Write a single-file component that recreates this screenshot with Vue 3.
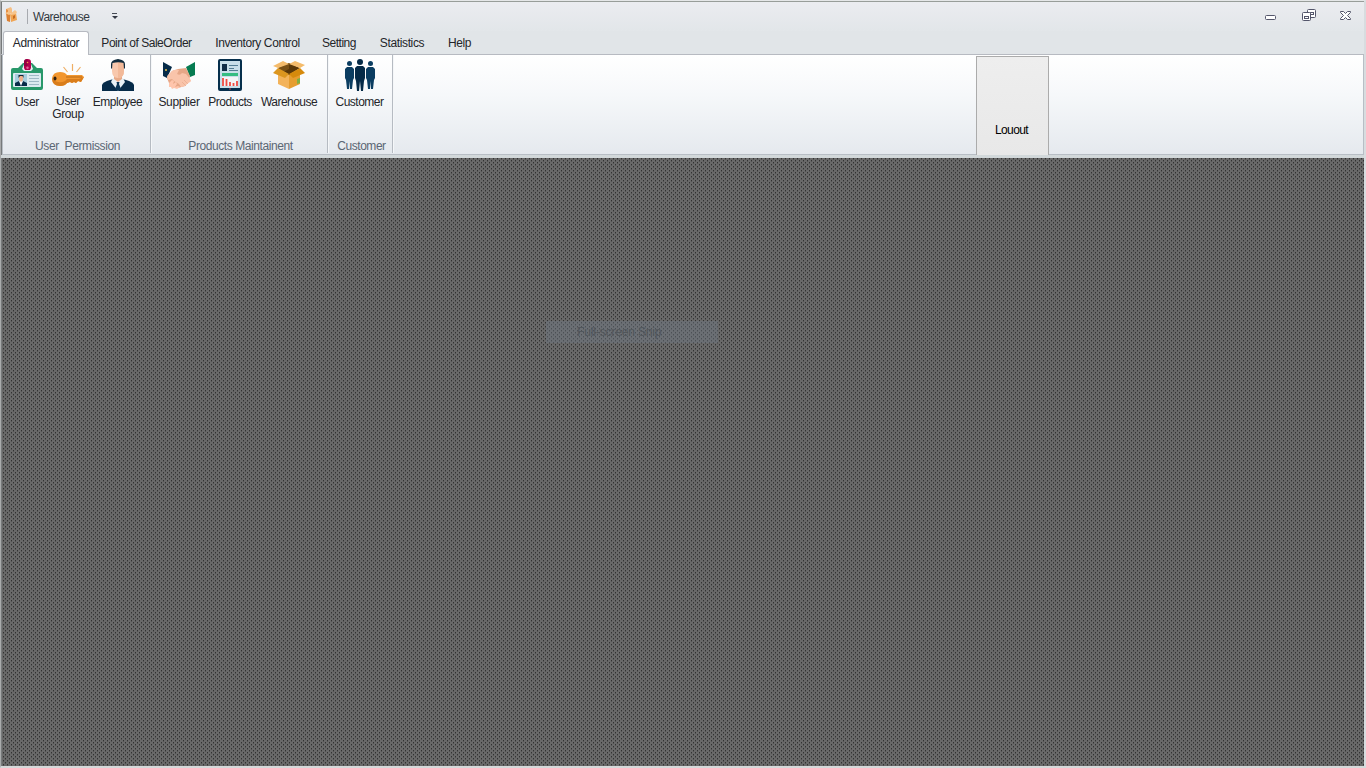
<script setup>
const tabs = [
  { t: 'Administrator', w: 86, s: -0.32, on: true },
  { t: 'Point of SaleOrder', w: 115, s: -0.47 },
  { t: 'Inventory Control', w: 107, s: -0.41 },
  { t: 'Setting', w: 56, s: -0.5 },
  { t: 'Statistics', w: 70, s: -0.37 },
  { t: 'Help', w: 45, s: -0.4 },
]
const groups = [
  { name: 'User  Permission', w: 147, s: -0.4, items: [
    { t: 'User', w: 42, s: -0.3, icon: 'user' },
    { t: 'User\nGroup', w: 40, s: -0.4, icon: 'key' },
    { t: 'Employee', w: 59, s: -0.5, icon: 'employee' },
  ] },
  { name: 'Products Maintainent', w: 175, s: -0.42, items: [
    { t: 'Supplier', w: 49, s: -0.37, icon: 'supplier' },
    { t: 'Products', w: 53, s: -0.46, icon: 'products' },
    { t: 'Warehouse', w: 65, s: -0.53, icon: 'warehouse' },
  ] },
  { name: 'Customer', w: 63, s: -0.47, items: [
    { t: 'Customer', w: 56, s: -0.5, icon: 'customer' },
  ] },
]
</script>

<template>
  <div class="window">
    <header class="titlebar">
      <svg class="app-icon" width="14" height="16" viewBox="0 0 14 16">
        <path d="M1 2l5-2 1 2v4l-5 1-1-2z" fill="#f5be83" /><path d="M1 2l2 1v4l-2-1z" fill="#e69043" />
        <path d="M1 6l4 1v8l-3-1z" fill="#dc8132" /><path d="M5 7l6-1 1 7-6 2z" fill="#f0a553" />
        <path d="M5 7l5-4 2 2-1 2-5 1zM0 6l3-1 3 2-2 1z" fill="#f7c58c" /><path d="M8 9l2-1v3l-2 1z" fill="#c66b21" />
      </svg>
      <span class="rule"></span>
      <span class="title">Warehouse</span>
      <svg class="more" width="7" height="6" viewBox="0 0 7 6"><path d="M0 0h5v1H0z" fill="#444953" /><path d="M0 3h6L3 6z" fill="#343944" /></svg>
      <span class="spacer"></span>
      <svg class="controls" width="88" height="16" viewBox="0 0 88 16" fill="none" stroke="#54566b">
        <rect x="1.500" y="7.500" width="10" height="4" rx="1" fill="#fff" />
        <rect x="43.500" y="1.500" width="8" height="8" rx="1" fill="#fff" /><rect x="46.500" y="4.500" width="3" height="2" />
        <rect x="38.500" y="4.500" width="8" height="8" rx="1" fill="#fff" /><rect x="40.500" y="8.500" width="4" height="2" />
        <path d="M76.500 3.500h3l2 2 2-2h3v1l-3 3 3 3v1h-3l-2-2-2 2h-3v-1l3-3-3-3z" fill="#fff" />
      </svg>
    </header>
    <nav class="tabs">
      <div v-for="tab in tabs" :key="tab.t" class="tab" :class="{ on: tab.on }" :style="{ width: tab.w + 'px', letterSpacing: tab.s + 'px' }">{{ tab.t }}</div>
    </nav>
    <section class="ribbon">
      <div v-for="g in groups" :key="g.name" class="group" :style="{ width: g.w + 'px' }">
        <div class="items">
          <div v-for="i in g.items" :key="i.t" class="item" :class="i.icon" :style="{ width: i.w + 'px' }">
            <svg width="32" height="32" viewBox="0 0 32 32">
              <g v-if="i.icon === 'user'">
                <path d="M2 9h5l5-5h9l5 5h4q2 0 2 2v18q0 2-2 2H2q-2 0-2-2V11q0-2 2-2z" fill="#28986a" />
                <path d="M13 5h7l2 5-2 2h-7l-2-2z" fill="#e5f0f3" />
                <rect x="2" y="14" width="28" height="14" rx="1" fill="#dceaf0" />
                <path d="M13 3q0-3 3.500-3t3.500 3v6l-1 2h-5l-1-2z" fill="#b4004e" /><path d="M13 3q0-3 3.500-3v7H13z" fill="#940042" /><circle cx="16.500" cy="8.700" r="1.200" fill="#dd6a96" /><circle cx="16.500" cy="3.500" r=".8" fill="#ef9d48" />
                <path d="M4 15h12v12H4z" fill="#a8cede" /><path d="M4 27v-3l4-2h4l4 2v3z" fill="#092c49" /><path d="M8 22h4l-2 5z" fill="#fff" /><path d="M8 17h4v4l-2 2-2-2z" fill="#efb18d" /><path d="M7.500 19v-3h5v3l-1-2H9z" fill="#102435" />
                <path d="M18 16.500h10M18 19.500h10M18 22.500h10M18 25.500h10" stroke="#9fb9c5" />
              </g>
              <g v-else-if="i.icon === 'key'">
                <path d="M0 19q1-6 8-6 5 0 7 3h15l2 2-3 5-3-1-2 2-2-1-2 1-2-1-3 1q-2 3-7 3-8-1-8-8z" fill="#f2962e" />
                <path d="M0 19q0 8 8 8 5 0 7-3l3-1 2 1 2-1 2 1 2-2 3 1 3-5-5 2H15q-3 4-9 3-4-1-6-4z" fill="#d97d1b" /><path d="M14 18h16" stroke="#b96a15" /><ellipse cx="3" cy="19.500" rx="1.500" ry="2" fill="#32200e" />
                <path d="M20.500 5v7M11.500 8l4 5M28.500 8l-4 5" stroke="#efae63" stroke-width="1.200" />
              </g>
              <g v-else-if="i.icon === 'employee'">
                <path d="M0 32v-6q1-3 8-5l4-1h8l4 1q7 2 8 5v6z" fill="#062b49" /><path d="M11 19h10l2 4-7 9-7-9z" fill="#e8f1f6" /><path d="M14.500 23h3l-.5 2 2 5-3 2-3-2 2-5z" fill="#0a3657" />
                <path d="M12 15h8v5l-4 3-4-3z" fill="#e8aa88" /><path d="M10 6q0-4 6-4t6 4v6q0 7-6 7t-6-7z" fill="#f8c8ad" /><path d="M16 2q6 0 6 4v6q0 7-6 7z" fill="#f2b999" /><path d="M9 9V5q0-4 7-5 7 1 7 5v4l-1 1-.5-6q-5-1.500-11 0L10 10z" fill="#132d3e" />
              </g>
              <g v-else-if="i.icon === 'supplier'">
                <path d="M0 3l9 5-5 11-4-2z" fill="#062b49" /><path d="M32 3l-9 5 4 10 5-2z" fill="#067b51" /><circle cx="3" cy="11" r="1" fill="#edc44b" />
                <path d="M9 12l6-2 8-1 4 8-1 5-4 5-7 2-6-2-3-3-2-5z" fill="#e6a787" />
                <path d="M9 12q3-2 7-1l-2 4q3 2 5-1l4 1 4 5q2 2 0 3l-3 2-2 2-3 1-1 0-2-3-5-3-2-2-4 1-1-4z" fill="#f9c4aa" />
                <path d="M6 24l3-3 2 1-1 3 3-2 1 2-2 3 3-1 2 1-3 2-3-1-2 1-1-2-2 0z" fill="#ffc5ac" />
                <path d="M19 23l4 4m-2-6l4 4" stroke="#e7aa8e" stroke-width=".7" />
              </g>
              <g v-else-if="i.icon === 'products'">
                <rect x="4" width="24" height="32" rx="2" fill="#062f4c" /><rect x="6" y="2" width="20" height="27" fill="#c8dfe9" /><path d="M8 5h5v7H8z" fill="#102e47" /><path d="M15 6.500h9M15 9.500h5M15 11.500h9" stroke="#547e94" /><path d="M8 14h16v3H8z" fill="#34bd82" /><path d="M8 18h16v9H8z" fill="#f3f5f7" />
                <path d="M9 19v8M12.500 20v7M16 23v4M19.500 24v3M23 22v5" stroke="#f04c42" stroke-width="1.800" /><path d="M15 30h2" stroke="#bd3e4f" />
              </g>
              <g v-else-if="i.icon === 'warehouse'">
                <path d="M5 14l11 1v15L5 25z" fill="#f3b35a" /><path d="M16 15l11-1v11l-11 5z" fill="#e69d2f" /><path d="M5 9l11-5 11 5-11 7z" fill="#5a3708" /><path d="M5 9l11-5v6l-6 3z" fill="#795015" />
                <path d="M5 9L0 7l10-5 6 3zM27 9l5-3-10-4-6 3z" fill="#f4bb6b" /><path d="M5 9l11 6-4 4-12-5z" fill="#dc961f" /><path d="M27 9l-11 6 4 4 12-5z" fill="#d68a0c" /><path d="M24 20l3-1v5l-3 1z" fill="#81af43" />
              </g>
              <g v-else>
                <g fill="#0b3d61"><circle cx="5.500" cy="4.500" r="2.500" /><path d="M3 8h5l2 2v9l-1 2-1 9H6l-.5-8L5 30H3L2 21l-1-2v-9z" /></g>
                <g fill="#0b3d61"><circle cx="26.500" cy="4.500" r="2.500" /><path d="M24 8h5l2 2v9l-1 2-1 9h-2l-.5-8-.5 8h-2l-1-9-1-2v-9z" /></g>
                <g fill="#052a47"><circle cx="16" cy="3" r="3" /><path d="M13 7h6l2 2v10l-1 3-1 10h-2l-1-10-1 10h-2l-1-10-1-3V9z" /></g>
              </g>
            </svg>
            <span class="label" :style="{ letterSpacing: i.s + 'px' }">{{ i.t }}</span>
          </div>
        </div>
        <div class="caption" :style="{ letterSpacing: g.s + 'px' }">{{ g.name }}</div>
      </div>
      <div class="logout">Louout</div>
    </section>
    <main class="workspace"><div class="snip"><span>Full-screen Snip</span></div></main>
  </div>
</template>

<style>
body { background: #d3d5d6; overflow: hidden; }
</style>
<style scoped>
.window { box-sizing: border-box; width: 1366px; height: 768px; display: flex; flex-direction: column; font: 12px/13px "Liberation Sans", Arial, sans-serif; color: #24252a; background: linear-gradient(90deg, #777a7b 1px, #e1e5e8 1px); border-left: 1px solid #a9abac; border-right: 2px solid #d8dcdf; border-top: 1px solid #e5e7e8; border-bottom: 2px solid #d6d9da; }
.titlebar { height: 30px; box-sizing: border-box; display: flex; border-top: 1px solid #989d99; background: linear-gradient(#ebecf0, #e2e6e9); box-shadow: inset 1px 0 #777a7b; flex: none; }
.app-icon { margin: 5px 0 0 4px; }
.rule { width: 1px; height: 15px; margin: 7px 5px 0 8px; background: #a7aaaf; }
.title { width: 57px; margin-top: 9px; letter-spacing: -.5px; color: #333941; }
.more { margin: 11px 0 0 22px; }
.spacer { flex: 1; }
.controls { margin: 6px 12px 0 0; }
.tabs { height: 24px; display: flex; padding-left: 2px; box-sizing: border-box; border-bottom: 1px solid #b7bac1; background: #e1e5e8; box-shadow: inset 1px 0 #777a7b; flex: none; }
.tab { box-sizing: border-box; height: 24px; padding-top: 6px; text-align: center; white-space: nowrap; }
.on { position: relative; padding-top: 5px; border: 1px solid #b7bac1; border-bottom: 0; border-radius: 3px 3px 0 0; background: #fff; }
.ribbon { height: 100px; margin-left: 1px; box-sizing: border-box; display: flex; background: linear-gradient(#fff, #f6f8fa 40%, #e5e9ee); border: 1px solid #b8bec5; border-top: 0; flex: none; }
.group { height: 98px; border-right: 1px solid #b6bbc2; box-shadow: 1px 0 #f5f7f9; flex: none; }
.group + .group { margin-left: 1px; }
.items { display: flex; height: 85px; padding-left: 3px; }
.group + .group .items { padding-left: 2.500px; }
.item { display: flex; flex-direction: column; align-items: center; padding-top: 4px; flex: none; }
.label { margin-top: 5px; text-align: center; white-space: pre; }
.key .label { margin-top: 4px; }
.caption { padding-left: 2px; text-align: center; white-space: pre; color: #5b6673; }
.logout { box-sizing: border-box; width: 73px; height: 99px; margin: 1px 0 0 583px; border: 1px solid #ababab; border-bottom: 0; background: linear-gradient(#eee, #e8e8e8); text-align: center; padding: 67px 2px 0 0; letter-spacing: -.6px; color: #000; }
.workspace { flex: 1; box-sizing: border-box; border-top: 3px solid #d2d8da; padding: 163px 0 0 545px; box-shadow: inset 1px 0 #777a7b; background: url("data:image/svg+xml,%3Csvg xmlns='http://www.w3.org/2000/svg' width='4' height='4' shape-rendering='crispEdges'%3E%3Cpath fill='%23696969' d='M0 0h4v4H0z'/%3E%3Cpath fill='%23323232' d='M0 0h1v1H0zM2 2h1v1H2z'/%3E%3Cpath fill='%23515151' d='M0 1h1v1H0zM2 3h1v1H2z'/%3E%3C/svg%3E") 0 0 / 4px 4px; }
.snip { width: 172px; height: 22px; background: rgba(112, 121, 131, .43); }
.snip span { display: block; padding: 5px 0 0 31px; letter-spacing: -.15px; color: #51565b; }
</style>
